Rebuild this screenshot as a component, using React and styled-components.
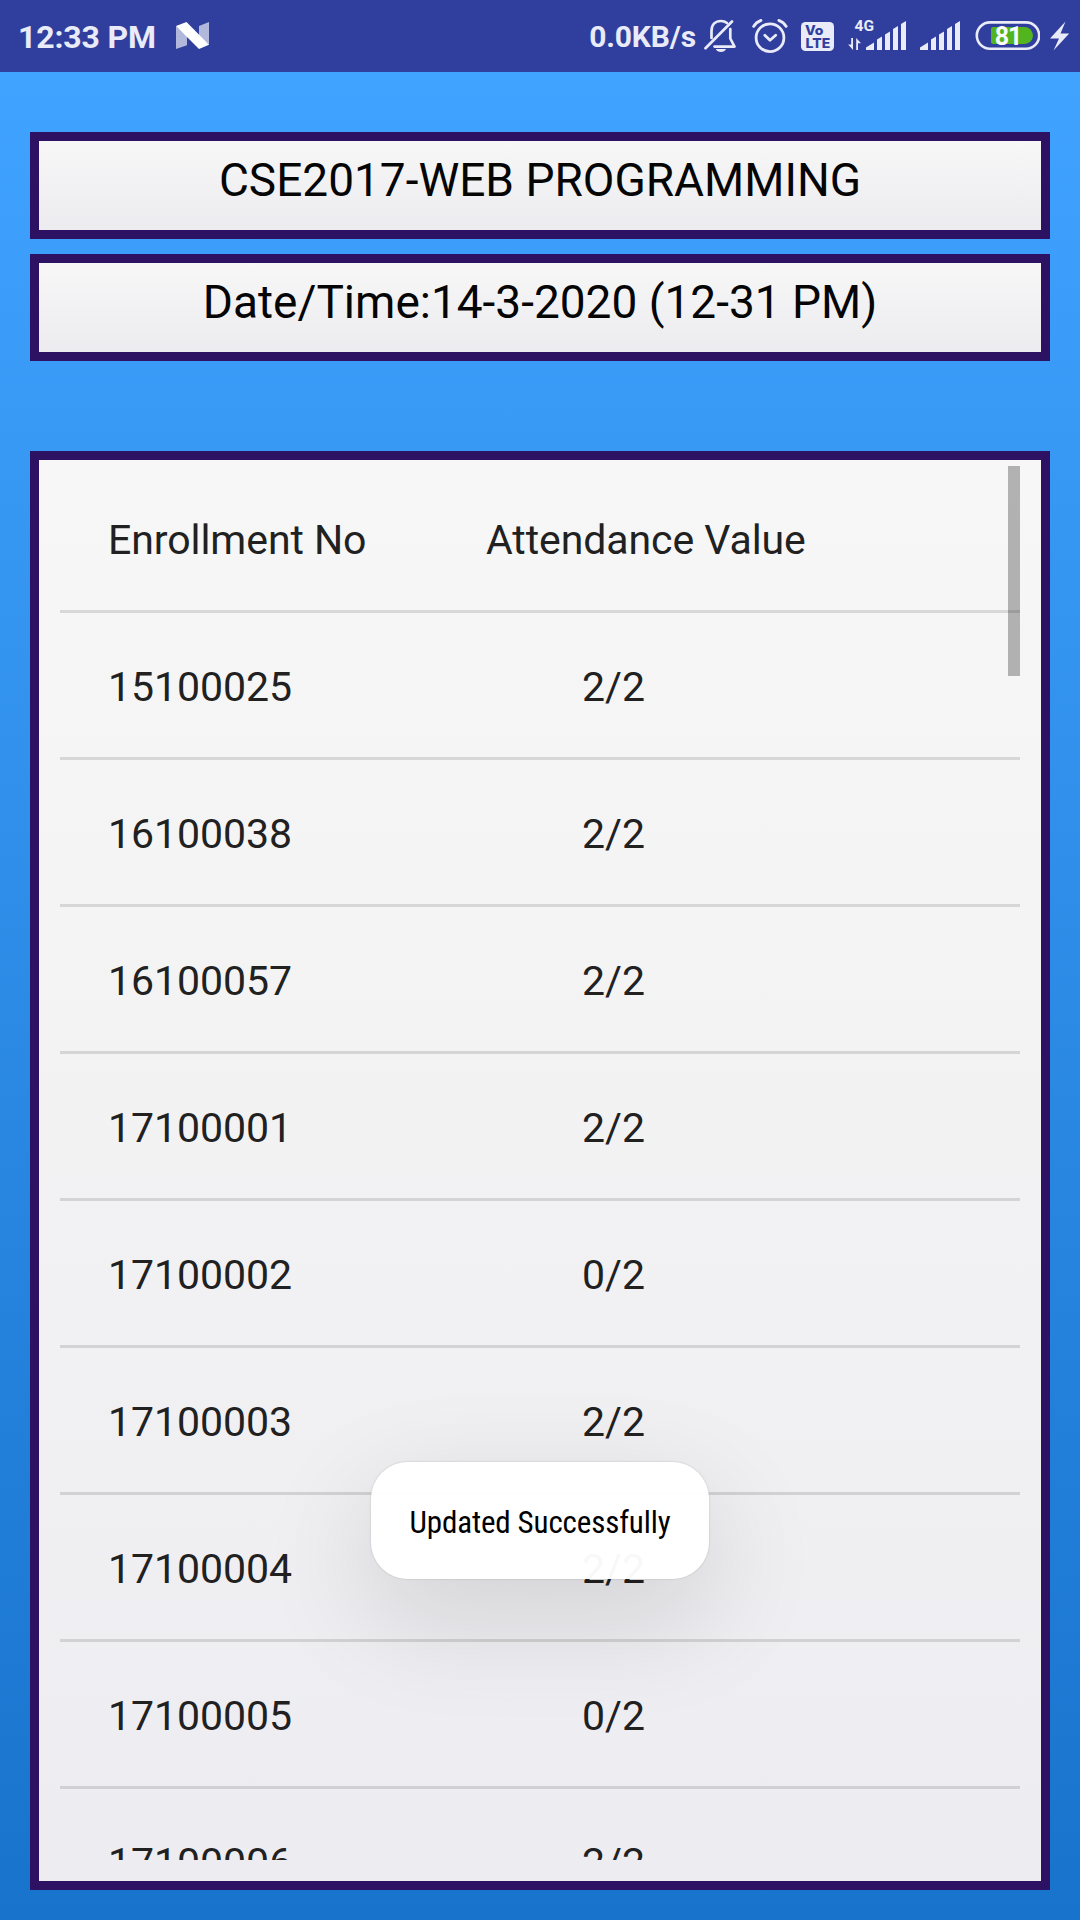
import React from "react";
import styled, { createGlobalStyle } from "styled-components";

const INK = "#e9ebf8";
const STATUS = "#303e9e";

const GlobalStyle = createGlobalStyle`
  *, *::before, *::after { box-sizing: border-box; }
  body { margin: 0; }
`;

const Screen = styled.main`
  position: relative;
  display: flex;
  flex-direction: column;
  width: 1080px;
  height: 1920px;
  overflow: hidden;
  background: linear-gradient(180deg, #40a3ff 72px, #1873cc 100%);
  font-family: Roboto, "Liberation Sans", sans-serif;
`;

const StatusBar = styled.header`
  display: flex;
  align-items: center;
  flex: 0 0 72px;
  padding: 0 10px 0 18px;
  background: ${STATUS};
  color: ${INK};
`;

const Clock = styled.span`
  font-size: 32px;
  font-weight: 700;
  line-height: 40px;
  padding-top: 2px;
  letter-spacing: -0.15px;
`;

const Speed = styled.span`
  margin-left: auto;
  font-size: 30px;
  font-weight: 700;
  line-height: 40px;
  padding-top: 2px;
  letter-spacing: -0.15px;
`;

const Glyph = styled.svg`
  flex: none;
  width: ${(p) => p.$w}px;
  height: 36px;
  margin-left: ${(p) => p.$gap}px;
  fill: none;
  font-family: Roboto, "Liberation Sans", sans-serif;
  font-weight: 700;
`;

const Content = styled.section`
  display: flex;
  flex-direction: column;
  flex: 1;
  min-height: 0;
  padding: 60px 30px 30px;
`;

const Field = styled.div`
  height: 107px;
  margin-bottom: ${(p) => p.$after}px;
  padding-top: 12px;
  border: 9px solid #2d1263;
  background: linear-gradient(180deg, #f7f7f7, #ececf0) padding-box;
  color: #050505;
  font-size: 46px;
  line-height: 54px;
  text-align: center;
  white-space: nowrap;
`;

const Panel = styled.div`
  flex: 1;
  min-height: 0;
  padding: 6px 21px 21px;
  border: 9px solid #2d1263;
  background: linear-gradient(180deg, #f7f7f7, #f4f4f4 32%, #edecf1) padding-box;
`;

const List = styled.div`
  position: relative;
  height: 100%;
  overflow: hidden;
`;

const Row = styled.div`
  display: grid;
  grid-template-columns: 379px 1fr;
  align-items: center;
  height: 147px;
  padding: 4px 0 0 48px;
  border-bottom: 3px solid rgba(0, 0, 0, 0.12);
  color: #212121;
  font-size: 41px;
  letter-spacing: -0.03px;
  line-height: 48px;
  white-space: nowrap;
`;

const HeadingRow = styled(Row)`
  grid-template-columns: 378px 1fr;
  letter-spacing: -0.07px;
`;

const Value = styled.span`
  padding-left: 95px;
`;

const ScrollThumb = styled.div`
  position: absolute;
  top: 0;
  right: 0;
  width: 12px;
  height: 210px;
  background: rgba(0, 0, 0, 0.28);
`;

const Toast = styled.div`
  position: absolute;
  left: 371px;
  top: 1462px;
  display: flex;
  align-items: center;
  justify-content: center;
  width: 338px;
  height: 117px;
  padding-top: 5px;
  border-radius: 37px;
  background: rgba(255, 255, 255, 0.97);
  box-shadow: 0 0 2px rgba(0, 0, 0, 0.22), 0 36px 110px 6px rgba(0, 0, 0, 0.12);
  color: #000;
  font-family: "Roboto Condensed", Roboto, sans-serif;
  font-size: 31px;
  font-stretch: condensed;
  letter-spacing: -0.13px;
  line-height: 38px;
  white-space: nowrap;
`;

const SignalBars = ({ x }) => (
  <g fill={INK}>
    <path d={`M${x} 50V47.6L${x + 8} 42.5V50Z`} />
    <path d={`M${x + 11} 50V39.5L${x + 16} 36.5V50Z`} />
    <path d={`M${x + 19} 50V34.5L${x + 24} 31.5V50Z`} />
    <path d={`M${x + 27} 50V29L${x + 32} 26V50Z`} />
    <path d={`M${x + 35} 50V24L${x + 40} 21V50Z`} />
  </g>
);

const NougatIcon = () => (
  <Glyph $w={33} $gap={20} viewBox="176 18 33 36">
    <path d="M176 26L187 36V45.2L176 49Z" fill="#fff" opacity=".63" />
    <path d="M199 26L209 22V45L199 36Z" fill="#fff" opacity=".63" />
    <path d="M176 26L186.5 22L209 44.7L199 49Z" fill="#fff" />
  </Glyph>
);

const MutedBellIcon = () => (
  <Glyph $w={32} $gap={8} viewBox="704 18 32 36">
    <g stroke={INK} strokeWidth="2.7" strokeLinecap="round" strokeLinejoin="round">
      <path d="M705.5 48.2L732 21.5" />
      <path d="M711.5 38V31C711.5 24.5 715.5 21 721 21C723.5 21 725.5 21.8 727 23" />
      <path d="M730.3 29V38.5L734.5 46.6H714.5" />
    </g>
    <path d="M715.8 49H726C724.7 53 717.1 53 715.8 49Z" fill={INK} />
  </Glyph>
);

const AlarmIcon = () => (
  <Glyph $w={36} $gap={16} viewBox="752 18 36 36">
    <g stroke={INK} strokeWidth="2.8" strokeLinecap="round" strokeLinejoin="round">
      <circle cx="770" cy="37.7" r="13.9" />
      <path d="M764.8 35.2L770 40.3L775.7 35.2" />
      <path d="M753.6 26.4C755.3 23.7 757.8 21.6 761 20.4" />
      <path d="M786.2 26.4C784.5 23.7 782 21.6 778.8 20.4" />
    </g>
  </Glyph>
);

const VolteIcon = () => (
  <Glyph $w={33} $gap={13} viewBox="801 18 33 36">
    <rect x="801" y="22" width="33" height="29" rx="4.5" fill={INK} />
    <g fill={STATUS} fontFamily="Inter, sans-serif" fontWeight="800">
      <text x="805" y="35" fontSize="12.6" textLength="18.5" lengthAdjust="spacingAndGlyphs">Vo</text>
      <text x="805.6" y="47.6" fontSize="13.4" textLength="24.6" lengthAdjust="spacingAndGlyphs">LTE</text>
    </g>
  </Glyph>
);

const DataSignalIcon = () => (
  <Glyph $w={58} $gap={14} viewBox="848 18 58 36">
    <text x="854.5" y="31.2" fontSize="15.5" textLength="19.5" lengthAdjust="spacingAndGlyphs" fill={INK}>4G</text>
    <path d="M851.2 38H853V50L848.2 44.6H851.2Z" fill={INK} />
    <path d="M856.2 50V38L861 43.2H858V50Z" fill={INK} />
    <SignalBars x={866} />
  </Glyph>
);

const SignalIcon = () => (
  <Glyph $w={40} $gap={14} viewBox="920 18 40 36">
    <SignalBars x={920} />
  </Glyph>
);

const BatteryIcon = () => (
  <Glyph $w={65} $gap={15} viewBox="975 18 65 36">
    <rect x="976.8" y="22.4" width="62.4" height="26.4" rx="13.2" stroke={INK} strokeWidth="2.6" />
    <path d="M993 27H1024.5A8.5 8.5 0 0 1 1024.5 44H993Q991 44 991 42V29Q991 27 993 27Z" fill="#52b520" />
    <text x="994.8" y="44.8" fontSize="25" letterSpacing="-1.2" fill="#fafcff">81</text>
  </Glyph>
);

const BoltIcon = () => (
  <Glyph $w={20} $gap={10} viewBox="1050 18 20 36">
    <path d="M1065.5 21.5L1050 38.6H1059L1053.5 50.6L1069.2 33.4H1060.5Z" fill={INK} />
  </Glyph>
);

const records = [
  ["15100025", "2/2"],
  ["16100038", "2/2"],
  ["16100057", "2/2"],
  ["17100001", "2/2"],
  ["17100002", "0/2"],
  ["17100003", "2/2"],
  ["17100004", "2/2"],
  ["17100005", "0/2"],
  ["17100006", "2/2"],
];

export default function App() {
  return (
    <>
      <GlobalStyle />
      <Screen>
        <StatusBar>
          <Clock>12:33 PM</Clock>
          <NougatIcon />
          <Speed>0.0KB/s</Speed>
          <MutedBellIcon />
          <AlarmIcon />
          <VolteIcon />
          <DataSignalIcon />
          <SignalIcon />
          <BatteryIcon />
          <BoltIcon />
        </StatusBar>
        <Content>
          <Field $after={15}>CSE2017-WEB PROGRAMMING</Field>
          <Field $after={90}>Date/Time:14-3-2020 (12-31 PM)</Field>
          <Panel>
            <List>
              <HeadingRow>
                <span>Enrollment No</span>
                <span>Attendance Value</span>
              </HeadingRow>
              {records.map(([id, value]) => (
                <Row key={id}>
                  <span>{id}</span>
                  <Value>{value}</Value>
                </Row>
              ))}
              <ScrollThumb />
            </List>
          </Panel>
        </Content>
        <Toast role="status">Updated Successfully</Toast>
      </Screen>
    </>
  );
}
